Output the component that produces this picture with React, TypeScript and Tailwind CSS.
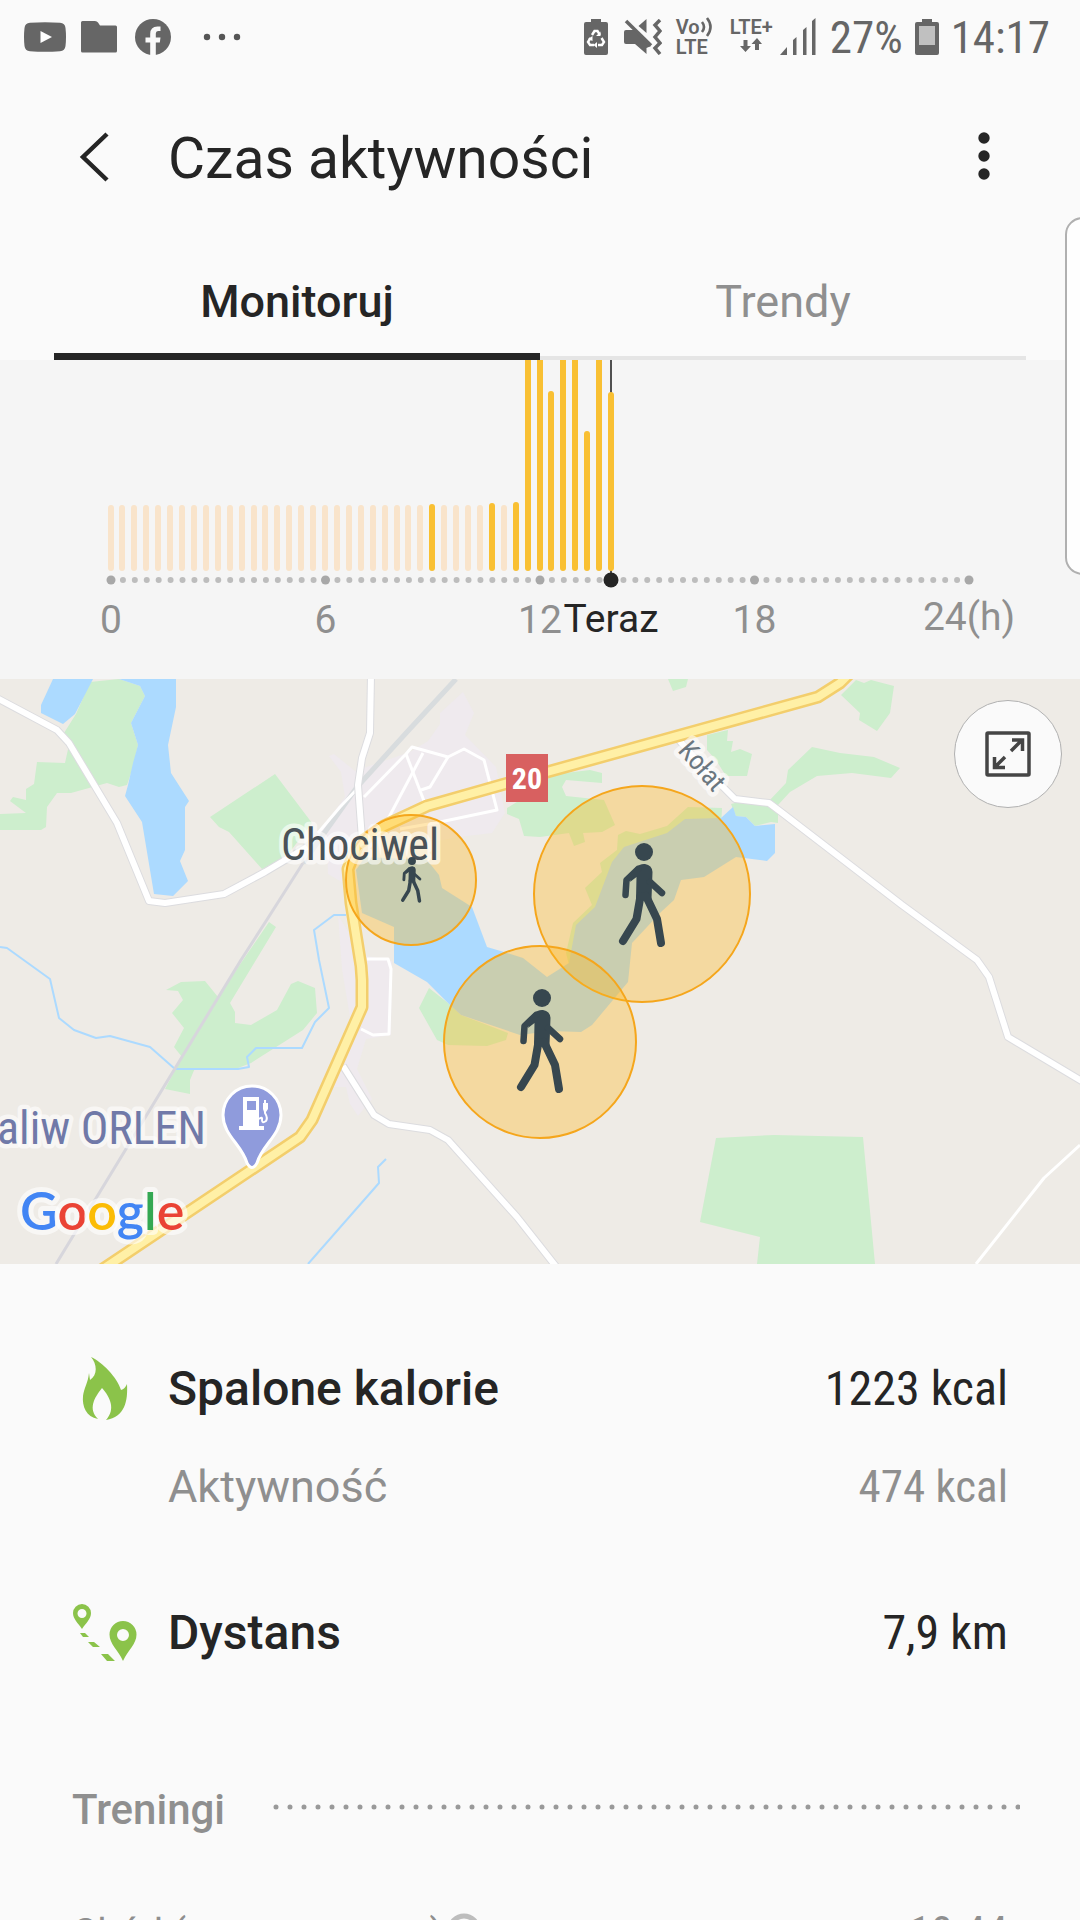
import type { ReactNode } from 'react'
import { clsx } from 'clsx'

// one bar per 20 minutes
const STEP = 858 / 72
const NOW = 42

const activeBars: Record<number, number> = {
  27: 67,
  32: 68,
  34: 69,
  35: 240,
  36: 240,
  37: 180,
  38: 240,
  39: 240,
  40: 140,
  41: 240,
  42: 179
}

const hours = [
  { label: '0', index: 0 },
  { label: '6', index: 18 },
  { label: '12', index: 36 },
  { label: '18', index: 54 },
  { label: '24(h)', index: 72 }
]

const walks = [
  { cx: 411, cy: 201, r: 65, headX: 412, headY: 182, scale: 0.44 },
  { cx: 642, cy: 215, r: 108, headX: 644, headY: 173, scale: 1 },
  { cx: 540, cy: 363, r: 96, headX: 542, headY: 319, scale: 1 }
]

const forests = [
  '90,3 119,0 140,7 145,17 131,44 138,66 133,88 127,106 119,108 107,104 71,114 57,114 47,128 46,148 41,151 0,151 0,135 26,134 10,122 13,118 26,121 26,110 34,105 37,83 65,84 69,66 64,54 76,35',
  '275,95 312,144 286,178 262,190 229,153 219,148 210,138',
  '269,243 276,248 256,281 230,324 235,333 235,344 251,346 277,331 291,305 298,302 315,309 317,334 303,351 251,384 238,389 195,389 190,401 190,415 165,410 182,378 174,368 184,349 172,334 183,321 178,312 166,311 181,303 205,302 218,318 243,281',
  '429,309 448,324 461,336 508,354 506,361 487,367 448,366 437,361 419,329',
  '722,129 688,128 667,147 640,155 626,152 618,156 617,171 600,184 602,193 585,209 592,226 573,244 566,274 569,286 590,250 640,180 721,150',
  '549,96 590,91 602,94 602,104 566,101 562,108 566,117 604,121 615,146 602,153 583,154 585,163 574,167 569,154 540,158 524,157 519,140 507,135 507,129 520,121 540,98',
  '707,56 728,51 727,62 733,62 731,73 740,70 752,75 747,97 726,97 716,81 707,71',
  '668,0 688,0 686,8 673,12',
  '856,1 864,4 871,1 894,7 890,34 877,52 859,41 860,34 841,16',
  '812,68 840,74 874,78 900,89 891,99 852,94 817,97 790,113 778,126 778,144 771,143 755,147 746,138 736,137 731,125 747,121 768,123 786,104 788,91',
  '716,459 774,456 863,458 875,585 757,585 760,558 700,543'
]

const lakes = [
  '53,0 93,0 75,35 63,45 41,34 41,26',
  '119,0 176,0 176,28 168,66 171,94 189,122 185,128 185,171 180,182 188,202 173,217 154,215 142,143 125,117 128,106 133,84 138,66 131,44 145,17 140,7',
  '356,191 365,178 427,181 439,196 442,209 472,228 487,268 504,273 523,279 547,298 569,284 576,246 595,228 612,183 624,168 667,154 685,140 721,139 733,128 736,137 746,138 755,147 775,145 775,174 767,182 736,178 704,198 681,201 674,221 661,233 632,264 628,303 592,346 581,353 550,352 520,356 461,336 448,324 427,303 394,284 394,248 362,234'
]

const towns = [
  '463,13 474,34 465,56 496,88 505,134 492,154 458,158 350,180 345,205 328,195 327,165 318,155 345,118 341,93 329,77 334,75 355,92 410,73 428,62 440,45 440,34',
  '338,236 362,276 392,282 391,356 366,360 357,390 372,420 358,437 350,425 346,408 334,408 352,350 342,290'
]

const streams = [
  '0,268 7,269 50,300 59,339 74,351 96,359 110,357 150,368 175,390 238,390 249,388 247,378 256,369 302,369 315,343 329,329 319,281 314,251 334,236 346,236',
  '386,480 378,488 379,504 308,585'
]

const streets = [
  '318,154 340,128 358,109',
  '364,118 406,75 412,68 448,78 464,70 484,81 497,131 440,143 400,150',
  '406,75 424,122',
  '423,74 388,140',
  '448,78 430,108 421,111',
  '367,280 388,280 391,290 389,355 373,356 361,350',
  '1080,466 1044,499 976,585'
]

const roads = [
  '-5,18 57,51 69,64 117,144 149,222 165,224 224,215 265,193 307,168',
  '371,-5 370,54 362,79 358,106 362,160',
  '343,387 374,436 389,445 430,451 448,461 517,538 558,590',
  '678,60 700,85 719,104 735,120 769,124 781,133 902,226 977,281 989,298 1008,358 1085,404'
]

const mainRoad = '94,596 300,458 312,441 362,328 362,301 361,287 351,224 348,190 358,165 384,147 427,127 547,93 818,18 840,4 850,-6'

const batteryPath = 'M7 0H17V3H22Q24 3 24 5V34Q24 36 22 36H2Q0 36 0 34V5Q0 3 2 3H7Z'

function StatusBar() {
  return (
    <div className="flex h-[74px] shrink-0 items-center justify-between pr-[30px] pl-[24px] font-['Roboto_Condensed',Roboto,sans-serif] text-[45px] text-[#666666]">
      <div className="flex items-center">
        <svg width="42" height="30" viewBox="0 0 42 30" className="mr-[15px]">
          <path d="M6 .8Q21-.5 36 .8Q41 1.3 41.500 6Q42.500 15 41.500 24Q41 28.700 36 29.200Q21 30.500 6 29.200Q1 28.700 .5 24Q-.5 15 .5 6Q1 1.300 6 .8Z" fill="currentColor" />
          <path d="M16.500 9L28 15L16.500 21Z" fill="#fff" />
        </svg>
        <svg width="36" height="32" viewBox="0 0 36 32" className="mr-[18px]">
          <path d="M1.500 0H14Q16 0 17 1.500L19 4.500H34.500Q36 4.500 36 6V30Q36 31.500 34.500 31.500H1.500Q0 31.500 0 30V1.500Q0 0 1.500 0Z" fill="currentColor" />
        </svg>
        <svg width="36" height="36" viewBox="0 0 36 36" className="mr-[32px]">
          <circle cx="18" cy="18" r="18" fill="currentColor" />
          <path d="M15.200 36V23.500H10.500V18.500H15.200V15Q15.200 7.500 22.500 7.500H25.500V12H23Q20.800 12 20.800 14.500V18.500H25.500L24.800 23.500H20.800V36Z" fill="#fafafa" />
        </svg>
        <svg width="38" height="8" viewBox="0 0 38 8" fill="#555">
          <circle cx="4" cy="4" r="3.200" />
          <circle cx="19" cy="4" r="3.200" />
          <circle cx="34" cy="4" r="3.200" />
        </svg>
      </div>
      <div className="flex items-center">
        <svg width="24" height="36" viewBox="0 0 24 36" className="mr-[16px]">
          <path d={batteryPath} fill="currentColor" />
          <path d="M8 16L10.500 12H13.500L16 16M17.500 19L20 23L18 26H14M6.500 19L4 23L6 26H10" fill="none" stroke="#fff" strokeWidth="2.400" />
          <path d="M16.500 12.500V17H12ZM13 23V29L9.500 26ZM4 20L8.500 17L8.500 22Z" fill="#fff" />
        </svg>
        <svg width="38" height="36" viewBox="0 0 38 36" className="mr-[14px]" fill="none" stroke="currentColor">
          <path d="M2 11H10L27 27L22.500 29V35L11 25H2Q0 25 0 23V13Q0 11 2 11ZM22.500 0V14L14.500 7Z" fill="currentColor" stroke="none" />
          <path d="M2 2L27 26.500" strokeWidth="3.500" />
          <path d="M36 1L31 6L36 12L31 18L36 24L31 29L36 35" strokeWidth="3.500" />
        </svg>
        <div className="mr-[14px] flex w-[38px] flex-col font-['Roboto',sans-serif] text-[20px] leading-[20px] font-semibold">
          <span className="flex items-center">
            Vo
            <svg width="14" height="20" viewBox="0 0 14 20" fill="none" stroke="currentColor" strokeWidth="2.600" className="shrink-0">
              <path d="M2 5Q6 10 2 15M7 1Q14 10 7 19" />
            </svg>
          </span>
          <span>LTE</span>
        </div>
        <div className="mr-[5px] flex w-[47px] flex-col items-center font-['Roboto',sans-serif] text-[20px] leading-[20px] font-semibold">
          <span>LTE+</span>
          <svg width="22" height="16" viewBox="0 0 22 16" className="mb-[4px]" fill="currentColor">
            <path d="M3.500 3H7.500V9H11L5.500 15L0 9H3.500ZM15 13V7H11.500L17 1L22 7H19V13Z" />
          </svg>
        </div>
        <svg width="36" height="38" viewBox="0 0 36 38" className="mr-[14px]" fill="currentColor">
          <path d="M0 37L7 29V37ZM13 22L16.500 19V37H13ZM23 12L26.500 9V37H23ZM32 3L35.500 0V37H32Z" />
        </svg>
        <span className="mr-[12px] pt-[2px]">27%</span>
        <svg width="24" height="36" viewBox="0 0 24 36" className="mr-[12px]">
          <path d={batteryPath} fill="currentColor" />
          <path d="M4 7H20V26H4Z" fill="#c0c0c0" />
        </svg>
        <span className="pt-[2px]">14:17</span>
      </div>
    </div>
  )
}

function ActivityChart() {
  return (
    <svg viewBox="0 0 1080 319" className="h-[319px] w-full shrink-0 bg-[#f5f5f5]" role="img" aria-label="Czas aktywności w ciągu dnia">
      <path d="M611 0V220" stroke="#505050" strokeWidth="2" />
      {Array.from({ length: NOW + 1 }, (_, i) => {
        const height = activeBars[i] ?? 66
        return (
          <rect
            key={i}
            x={Math.floor(108 + i * STEP)}
            y={211 - height}
            width="6"
            height={height}
            rx="3"
            fill={activeBars[i] ? '#f9c033' : '#f9e4cb'}
          />
        )
      })}
      {Array.from({ length: 73 }, (_, i) => (
        <circle key={i} cx={111 + i * STEP} cy="220" r={i % 18 === 0 ? 4.5 : 3} fill={i % 18 === 0 ? '#a8a8a8' : '#bdbdbd'} />
      ))}
      <circle cx="611" cy="220" r="7.500" fill="#252525" />
      <g fontSize="39" textAnchor="middle" fill="#8f8f8f">
        {hours.map((hour) => (
          <text key={hour.label} x={111 + hour.index * STEP} y={hour.index === 72 ? 270 : 273}>
            {hour.label}
          </text>
        ))}
        <text x="611" y="272" fill="#252525">Teraz</text>
      </g>
    </svg>
  )
}

function Walker({ x, y, scale }: { x: number; y: number; scale: number }) {
  return (
    <g transform={`translate(${x} ${y}) scale(${scale})`} fill="none" stroke="#37474f" strokeLinecap="round" strokeLinejoin="round">
      <circle r="9" fill="#37474f" stroke="none" />
      <path d="M-9 16Q-4 11.500 1 12Q8 13 8.500 20L7.500 47H-8L-7.500 25L-14 30Z" fill="#37474f" stroke="none" />
      <path d="M-6 17L-17.500 28L-18.500 43M6 30L18 41" strokeWidth="6.500" />
      <path d="M-3.500 44L-7.500 67L-21 89M2 44L13 67L17 91" strokeWidth="8" />
    </g>
  )
}

function ActivityMap() {
  return (
    <div className="relative shrink-0">
      <svg viewBox="0 0 1080 585" preserveAspectRatio="xMidYMid slice" className="block h-[585px] w-full bg-[#eeebe6] font-['Roboto_Condensed',Roboto,sans-serif]" role="img" aria-label="Mapa aktywności">
        {towns.map((points) => <polygon key={points} points={points} fill="#efeaee" />)}
        {forests.map((points) => <polygon key={points} points={points} fill="#cdeecd" />)}
        {lakes.map((points) => <polygon key={points} points={points} fill="#acdaff" />)}
        <g fill="none" strokeLinejoin="round">
          {streams.map((points) => <polyline key={points} points={points} stroke="#acdaff" strokeWidth="2" />)}
          <polyline points="456,0 407,53 357,108 303,184" stroke="#d8dcde" strokeWidth="5" />
          <polyline points="303,184 268,239 241,281 56,585" stroke="#d7d6dc" strokeWidth="3" />
          {streets.map((points) => <polyline key={points} points={points} stroke="#fff" strokeWidth="3" />)}
          {roads.map((points) => <polyline key={points} points={points} stroke="#dcdcdf" strokeWidth="8" />)}
          {roads.map((points) => <polyline key={points} points={points} stroke="#fff" strokeWidth="6" />)}
          <polyline points={mainRoad} stroke="#f3ce6c" strokeWidth="13" />
          <polyline points={mainRoad} stroke="#fff0a6" strokeWidth="8" />
        </g>

        <rect x="506" y="75" width="42" height="48" fill="#d86060" />
        <text x="527" y="110" fontSize="30" textAnchor="middle" fill="#fff" className="font-bold">20</text>

        {walks.map((walk) => (
          <circle key={walk.cx} cx={walk.cx} cy={walk.cy} r={walk.r} fill="#ffb71e" fillOpacity=".35" stroke="#f5a61c" strokeWidth="2" />
        ))}

        <g stroke="#fff" strokeOpacity=".6" strokeWidth="9" strokeLinejoin="round" paintOrder="stroke">
          <text x="281" y="181" fontSize="44" fill="#4a5258">Chociwel</text>
          <text x="206" y="465" fontSize="46" textAnchor="end" fill="#7079a8">aliw ORLEN</text>
          <text x="0" y="0" fontSize="27" fill="#6b7780" transform="translate(677 72) rotate(49)">Kołat</text>
        </g>
        {walks.map((walk) => <Walker key={walk.cx} x={walk.headX} y={walk.headY} scale={walk.scale} />)}

        <path d="M252 407A29 29 0 0 0 223 436C223 456 242 466 247 484Q252 493 257 484C262 466 281 456 281 436A29 29 0 0 0 252 407Z" fill="#8f9bdc" stroke="#fff" strokeWidth="3" />
        <path fillRule="evenodd" d="M243 418H259V447H264V451H239V447H243ZM247 422V431H256V422Z" fill="#fff" />
        <path d="M259 440Q263 437 262 441Q262 445 266 442Q268 439 265 434V421" fill="none" stroke="#fff" strokeWidth="2" />
        <path d="M263 424H268V430L266 433H264L263 430Z" fill="#fff" />

        <text x="20" y="551" fontSize="52" stroke="#fff" strokeOpacity=".6" strokeWidth="10" strokeLinejoin="round" paintOrder="stroke" className="font-['Lato',sans-serif] font-semibold">
          <tspan fill="#4285f4">G</tspan>
          <tspan fill="#ea4335">o</tspan>
          <tspan fill="#fbbc05">o</tspan>
          <tspan fill="#4285f4">g</tspan>
          <tspan fill="#34a853">l</tspan>
          <tspan fill="#ea4335">e</tspan>
        </text>
      </svg>
      <button aria-label="Pełny ekran" className="absolute top-[21px] right-[18px] flex size-[108px] items-center justify-center rounded-full border border-[#b0b0b0] bg-[#fafafa]">
        <svg width="46" height="46" viewBox="0 0 46 46" fill="none" stroke="#454545" strokeWidth="3.500">
          <rect x="2" y="2" width="42" height="42" rx="1" />
          <path d="M26 20L37 9M27 9H37.500V20M20 26L10 36M9.500 26V36.500H20" />
        </svg>
      </button>
    </div>
  )
}

function FlameIcon() {
  return (
    <svg width="46" height="64" viewBox="0 0 46 64" fill="#8bc34a">
      <path d="M9 0C20 5 35 20 39 33Q43 32 45 27C46 44 43 60 24 63C34 52 28 40 20 31C12 41 6 52 16 62C4 60 0 49 1 39C2 31 6 26 7 16L8 23C16 18 15 7 9 0Z" />
    </svg>
  )
}

function RouteIcon() {
  return (
    <svg width="66" height="58" viewBox="0 0 66 58" fill="#8bc34a">
      <path fillRule="evenodd" d="M10 0A9 9 0 0 0 1 9C1 15 6 19 10 25C14 19 19 15 19 9A9 9 0 0 0 10 0ZM10 5A4.500 4.500 0 1 1 10 14A4.500 4.500 0 1 1 10 5Z" />
      <path fillRule="evenodd" d="M51 17A13.500 13.500 0 0 0 37.500 30.500C37.500 40 46 46 51 57C56 46 64.500 40 64.500 30.500A13.500 13.500 0 0 0 51 17ZM51 25A6 6 0 1 1 51 37A6 6 0 1 1 51 25Z" />
      <path d="M8 29H13L17 33H11ZM16 38H22L28 43H21ZM29 50H36L43 57H35Z" />
    </svg>
  )
}

type StatRowProps = { icon?: ReactNode; label: string; value: string; muted?: boolean }

function StatRow({ icon, label, value, muted = false }: StatRowProps) {
  return (
    <div className={clsx('flex h-[98px] items-center', muted ? 'text-[45px] text-[#8f8f8f]' : 'text-[48px]')}>
      <div className="flex w-[66px] justify-center">{icon}</div>
      <span className={clsx('ml-[30px] flex-1', !muted && 'font-medium')}>{label}</span>
      <span className="font-['Roboto_Condensed',Roboto,sans-serif]">{value}</span>
    </div>
  )
}

export default function App() {
  return (
    <div className="relative flex h-screen flex-col overflow-hidden bg-[#fafafa] font-['Roboto',sans-serif] text-[#252525]">
      <StatusBar />

      <header className="flex h-[166px] shrink-0 items-center pr-[72px] pl-[78px]">
        <button aria-label="Wstecz" className="w-[90px]">
          <svg width="32" height="50" viewBox="0 0 32 50" fill="none" stroke="currentColor" strokeWidth="4.500">
            <path d="M29 2L5 25L29 48" />
          </svg>
        </button>
        <h1 className="flex-1 pt-[4px] text-[57px]">Czas aktywności</h1>
        <button aria-label="Więcej opcji" className="px-[18px]">
          <svg width="12" height="50" viewBox="0 0 12 50" fill="currentColor">
            <circle cx="6" cy="6" r="5.700" />
            <circle cx="6" cy="24" r="5.700" />
            <circle cx="6" cy="42" r="5.700" />
          </svg>
        </button>
      </header>

      <div role="tablist" className="grid h-[120px] shrink-0 grid-cols-2 items-stretch px-[54px] text-[45px]">
        <button role="tab" aria-selected="true" className="border-b-[7px] border-[#252525] pt-[10px] font-medium">Monitoruj</button>
        <button role="tab" aria-selected="false" className="border-b-4 border-[#e5e5e5] pt-[7px] text-[#8f8f8f]">Trendy</button>
      </div>

      <ActivityChart />
      <ActivityMap />

      <section className="shrink-0 px-[72px] pt-[76px]">
        <StatRow icon={<FlameIcon />} label="Spalone kalorie" value="1223 kcal" />
        <StatRow label="Aktywność" value="474 kcal" muted />
        <div className="mt-[48px]">
          <StatRow icon={<RouteIcon />} label="Dystans" value="7,9 km" />
        </div>
      </section>

      <section className="shrink-0 pr-[60px] pl-[72px] pt-[79px] text-[#8f8f8f]">
        <div className="flex h-[96px] items-center gap-[48px]">
          <h2 className="text-[42px] font-medium">Treningi</h2>
          <svg height="8" className="mb-[4px] min-w-0 flex-1">
            <line x1="3" y1="4" x2="100%" y2="4" stroke="#999" strokeWidth="5" strokeLinecap="round" strokeDasharray="0 14" />
          </svg>
        </div>
        <div className="mt-[28px] flex h-[96px] items-center pr-[12px] text-[39px]">
          <span>Chód (automatyczny)</span>
          <svg width="34" height="34" viewBox="0 0 34 34" className="mb-[6px] ml-[4px]" fill="none" stroke="#bdbdbd" strokeWidth="5">
            <circle cx="17" cy="17" r="14" />
          </svg>
          <span className="ml-auto font-['Roboto_Condensed',Roboto,sans-serif] text-[45px]">10:44</span>
        </div>
      </section>

      <div className="absolute top-[217px] -right-[20px] h-[358px] w-[35px] rounded-[20px] border-2 border-[#b0b0b0] bg-[#fefefe]" />
    </div>
  )
}
